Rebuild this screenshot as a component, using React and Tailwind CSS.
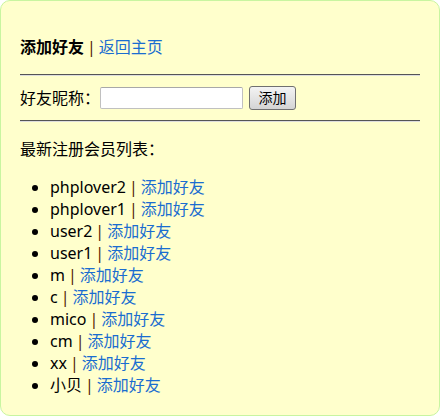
import React from "react";

const members = ["phplover2", "phplover1", "user2", "user1", "m", "c", "mico", "cm", "xx", "小贝"];

const App = () => {
  return (
    <div
      className="w-[440px] h-[416px] rounded-[10px] border border-[#c8f5a0] bg-[#ffffcc] px-[19px] pt-[35px] text-[16px] text-black"
      style={{ fontFamily: '"Noto Sans", "Noto Sans CJK SC", sans-serif' }}
    >
      <div className="leading-[22px]">
        <span className="font-bold">添加好友</span>
        <span className="px-[3px] text-[#552200]">|</span>
        <a className="text-[#1a6dd0]" href="#">返回主页</a>
      </div>

      <div className="mt-[16px] border-t border-b border-t-[#555555] border-b-[#dddddd]" />

      <div className="mt-[10px] flex items-center h-[24px]">
        <span className="leading-[22px]">好友昵称：</span>
        <input
          type="text"
          className="w-[143px] h-[22px] border border-[#c0c0c0] border-t-[#a8a8a8] rounded-[2px] bg-white outline-none"
        />
        <button className="ml-[6px] w-[47px] h-[24px] border border-[#707070] rounded-[3px] bg-gradient-to-b from-[#f4f4f4] to-[#d4d4d4] text-[14px] leading-[20px]">
          添加
        </button>
      </div>

      <div className="mt-[10px] border-t border-b border-t-[#555555] border-b-[#dddddd]" />

      <p className="mt-[16px] leading-[22px]">最新注册会员列表：</p>

      <ul className="mt-[16px] list-disc pl-[30px] leading-[22px]">
        {members.map((name) => (
          <li key={name}>
            {name}
            <span className="px-[3px] text-[#552200]">|</span>
            <a className="text-[#1a6dd0]" href="#">添加好友</a>
          </li>
        ))}
      </ul>
    </div>
  );
};

export default App;
